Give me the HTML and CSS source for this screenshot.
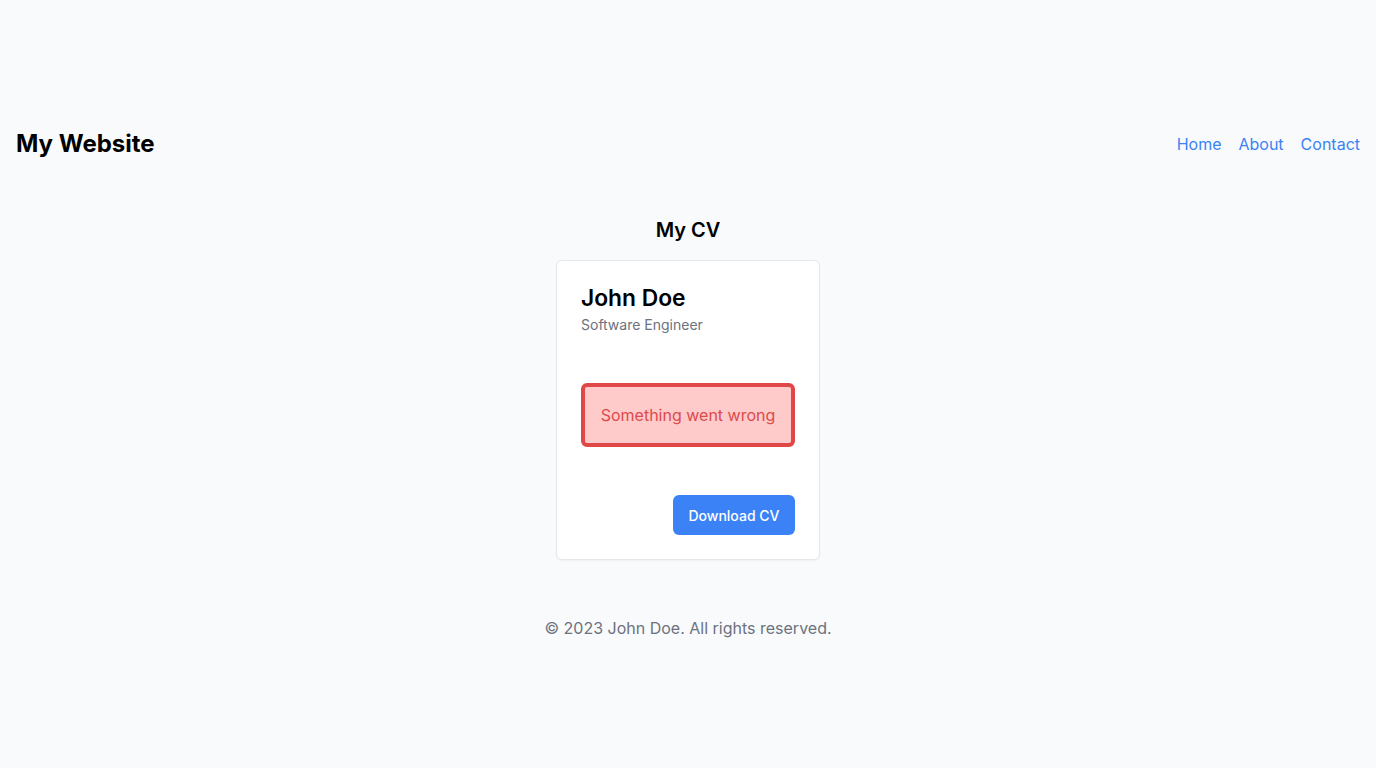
FILE: index.html
```html
<!DOCTYPE html>
<html lang="en">
<head>
<meta charset="utf-8">
<title>My Website</title>
<link rel="stylesheet" href="styles.css">
</head>
<body>
<div class="page">
  <header class="site-header">
    <h1 class="logo">My Website</h1>
    <nav class="nav">
      <a href="#">Home</a>
      <a href="#">About</a>
      <a href="#">Contact</a>
    </nav>
  </header>
  <main class="main">
    <h2 class="section-title">My CV</h2>
    <div class="card">
      <h3 class="name">John Doe</h3>
      <p class="role">Software Engineer</p>
      <div class="error">Something went wrong</div>
      <div class="actions">
        <button class="btn">Download CV</button>
      </div>
    </div>
  </main>
  <footer class="footer">© 2023 John Doe. All rights reserved.</footer>
</div>
</body>
</html>
```
FILE: styles.css
```css
* { box-sizing: border-box; }
html, body { margin: 0; padding: 0; }
body {
  background: #f9fafb;
  font-family: Inter, "Liberation Sans", sans-serif;
  color: #111827;
}
.page {
  min-height: 100vh;
  display: flex;
  flex-direction: column;
  justify-content: center;
}
.site-header {
  display: flex;
  justify-content: space-between;
  align-items: center;
  padding: 16px;
}
.logo {
  margin: 0;
  font-size: 24px;
  line-height: 32px;
  font-weight: 700;
  color: #000;
}
.nav { display: flex; gap: 17px; }
.nav a {
  color: #3b82f6;
  text-decoration: none;
  font-size: 16px;
  line-height: 24px;
}
.main {
  display: flex;
  flex-direction: column;
  align-items: center;
  padding-top: 40px;
  padding-bottom: 40px;
}
.section-title {
  margin: 0 0 16px;
  font-size: 20px;
  line-height: 28px;
  font-weight: 600;
  color: #000;
}
.card {
  width: 264px;
  background: #fff;
  border: 1px solid #e5e7eb;
  border-radius: 6px;
  padding: 24px;
  box-shadow: 0 1px 2px rgba(0,0,0,0.04);
}
.name {
  margin: 0 0 4px;
  font-size: 22.8px;
  line-height: 26px;
  font-weight: 600;
  color: #000;
}
.role {
  margin: 0;
  font-size: 14px;
  line-height: 20px;
  color: #6b7280;
}
.error {
  margin: 48px 0 48px;
  background: #fecaca;
  border: 4px solid #e04848;
  border-radius: 6px;
  padding: 16px 0;
  text-align: center;
  font-size: 16px;
  line-height: 24px;
  color: #dc4a4a;
}
.actions { display: flex; justify-content: flex-end; }
.btn {
  height: 40px;
  padding: 0 15.5px;
  background: #3b82f6;
  color: #fff;
  border: none;
  border-radius: 6px;
  font-family: inherit;
  font-size: 14px;
  font-weight: 500;
}
.footer {
  padding: 16px;
  text-align: center;
  font-size: 16px;
  line-height: 24px;
  color: #6b7280;
}
```
